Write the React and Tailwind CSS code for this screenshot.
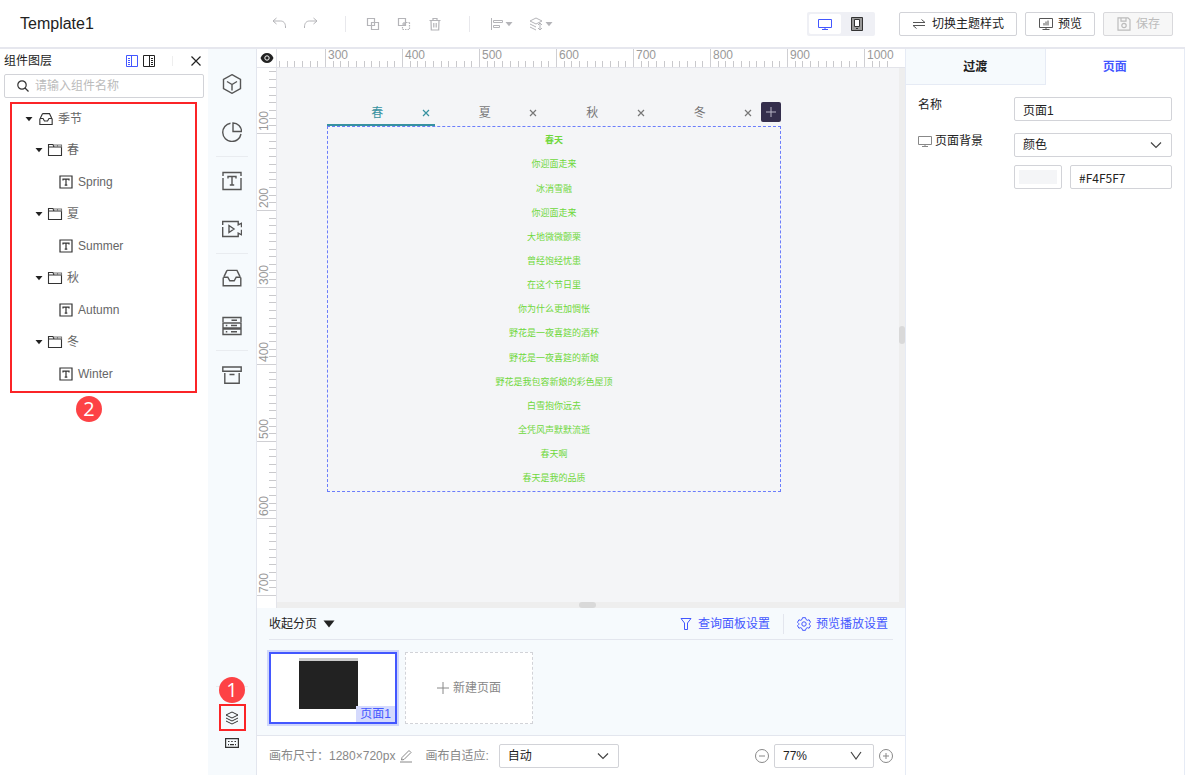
import React, { useState } from 'react';

const SCALE = 0.77;
const H_TICKS = Array.from({ length: 80 }, (_, i) => 240 + i * 10);
const V_TICKS = Array.from({ length: 69 }, (_, i) => 20 + i * 10);

const SEASONS = [
  { name: '春', child: 'Spring' },
  { name: '夏', child: 'Summer' },
  { name: '秋', child: 'Autumn' },
  { name: '冬', child: 'Winter' },
];

const POEM = [
  '春天',
  '你迎面走来',
  '冰消雪融',
  '你迎面走来',
  '大地微微颤栗',
  '曾经饱经忧患',
  '在这个节日里',
  '你为什么更加惆怅',
  '野花是一夜喜筵的酒杯',
  '野花是一夜喜筵的新娘',
  '野花是我包容新娘的彩色屋顶',
  '白雪抱你远去',
  '全凭风声默默流逝',
  '春天啊',
  '春天是我的品质',
];

function Icon({ size = 20, box = 20, className = '', children, width = 1.4 }) {
  return (
    <svg
      width={size}
      height={size}
      viewBox={`0 0 ${box} ${box}`}
      fill="none"
      stroke="currentColor"
      strokeWidth={width}
      className={`shrink-0 ${className}`}
      aria-hidden="true"
    >
      {children}
    </svg>
  );
}

const Caret = ({ className = '' }) => (
  <svg width="8" height="6" viewBox="0 0 8 6" fill="currentColor" className={`shrink-0 ${className}`} aria-hidden="true">
    <path d="M0.5 1h7L4 5.2z" />
  </svg>
);

const MonitorIcon = ({ size = 14, className }) => (
  <Icon size={size} box={14} className={className} width={1}>
    <path d="M0.5 2.5h13v8H0.5zM7 10.5v2M4 12.5h6" />
  </Icon>
);

const TextIcon = () => (
  <Icon size={14} box={14} width={1.2}>
    <path d="M1 1h12v12H1z" />
    <path d="M4 5.4V4.2h6v1.2M7 4.2v6M5.7 10.2h2.6" />
  </Icon>
);

const FolderIcon = () => (
  <Icon size={16} box={16} width={1.1}>
    <path d="M1.500 2.500h4.500l1 2.500h7.500v8.500h-13zM1.500 5H7" />
    <path d="M6.500 3h8v2.500M10.500 3v2" stroke="#777" />
  </Icon>
);

const InboxPath = () => (
  <>
    <path d="M5 2.4h10l3 6.2M5 2.4L2 8.6" />
    <path d="M1.2 9.4v8.4h17.6V9.4M1.2 9.2h4.6l2 3.6h4.4l2-3.6h4.6" />
  </>
);

const LayersPath = () => (
  <path d="M7 1l6 3-6 3-6-3zM1 7l6 3 6-3M1 10l6 3 6-3" />
);

function Ruler({ vertical }) {
  const start = vertical ? -12 : -183;
  const ticks = vertical ? V_TICKS : H_TICKS;
  return (
    <svg className={vertical ? 'h-full w-[19px] shrink-0' : 'h-[18px] w-0 flex-1'} aria-hidden="true">
      {ticks.map((value) => {
        const p = Math.round(value * SCALE + start);
        const major = value % 100 === 0;
        const from = major ? 0 : 12;
        return (
          <g key={value}>
            {vertical ? (
              <rect x={from} y={p} width={19 - from} height="1" fill={major ? '#cfcfd3' : '#c9c9cc'} />
            ) : (
              <rect x={p} y={from} width="1" height={18 - from} fill={major ? '#cfcfd3' : '#c9c9cc'} />
            )}
            {major && (
              <text
                x={vertical ? 0 : p + 3}
                y={vertical ? 0 : 10}
                transform={vertical ? `translate(11 ${p - 2}) rotate(-90)` : undefined}
                fill="#999"
                fontSize="12"
              >
                {value}
              </text>
            )}
          </g>
        );
      })}
    </svg>
  );
}

function Badge({ children, className }) {
  return (
    <span className={`absolute flex size-[26px] items-center justify-center rounded-full bg-[#fd4245] font-['Open_Sans',sans-serif] text-xl text-white ${className}`}>
      {children}
    </span>
  );
}

function ToolButton({ label, children }) {
  return (
    <button type="button" aria-label={label} className="flex h-6 items-center justify-center gap-[2px] text-[#b4b4b8]">
      {children}
    </button>
  );
}

function SelectBox({ label, value, options, onChange, className = '', wide }) {
  return (
    <div className={`relative ${className}`}>
      <select
        aria-label={label}
        value={value}
        onChange={(e) => onChange(e.target.value)}
        className="h-6 w-full appearance-none rounded-xs border border-[#d2d3d8] bg-white px-2 text-xs text-[#222]"
      >
        {options.map((o) => (
          <option key={o}>{o}</option>
        ))}
      </select>
      <Icon size={12} box={12} className={`pointer-events-none absolute top-[6px] text-[#444] ${wide ? 'right-3' : 'right-[10px]'}`} width={1.2}>
        <path d={wide ? 'M1 2l5 7 5-7' : 'M1 3.5l5 5 5-5'} />
      </Icon>
    </div>
  );
}

function Header() {
  return (
    <header className="flex h-[49px] shrink-0 items-center border-b-2 border-[#e6e7ee] bg-white pr-3 pl-5">
      <h1 className="w-[251px] text-base text-[#222]">Template1</h1>

      <div className="flex items-center">
        <div className="flex gap-4">
          <ToolButton label="撤销">
            <Icon size={16} box={16} width={1}>
              <path d="M5.500 2L2 5l3.500 3M2 5h7.500c3 0 5 2 5 6v1" />
            </Icon>
          </ToolButton>
          <ToolButton label="重做">
            <Icon size={16} box={16} width={1}>
              <path d="M10.500 2L14 5l-3.500 3M14 5H6.500c-3 0-5 2-5 6v1" />
            </Icon>
          </ToolButton>
        </div>
        <span className="mr-5 ml-[26px] h-4 w-px bg-[#e8e8ec]" />
        <div className="flex gap-[17px]">
          <ToolButton label="复制">
            <Icon size={14} box={14} width={1.2}>
              <path d="M1.500 1.500h7v7h-7zM5.500 5.500h7v7h-7z" />
            </Icon>
          </ToolButton>
          <ToolButton label="组合">
            <Icon size={14} box={14} width={1.2}>
              <path d="M1.500 1.500h7v7h-7zM7 5v4M5 7h4" />
              <path d="M12.500 5.500v7h-7v-3M9 5.500h3.500" strokeDasharray="1.500 1" />
            </Icon>
          </ToolButton>
          <ToolButton label="删除">
            <Icon size={14} box={14} width={1.2}>
              <path d="M1.500 3.500h11M5 3.500v-2h4v2M3 3.500l.3 9.500h7.400l.3-9.500M5.800 6v4.500M8.200 6v4.500" />
            </Icon>
          </ToolButton>
        </div>
        <span className="mr-[21px] ml-[27px] h-4 w-px bg-[#e8e8ec]" />
        <div className="flex gap-4">
          <ToolButton label="对齐">
            <Icon size={12} box={12} width={1}>
              <path d="M0.500 0v12M2.500 2.500h9v2h-9zM2.500 7.500h6v2h-6z" />
            </Icon>
            <Caret />
          </ToolButton>
          <ToolButton label="层级">
            <Icon size={14} box={14} width={1}>
              <path d="M7 1l6 3-6 3-6-3zM1 7l6 3M1 10l6 3M11 6v7M9 8l2-2 2 2M9 11l2 2 2-2" />
            </Icon>
            <Caret />
          </ToolButton>
        </div>
      </div>

      <div className="ml-auto flex items-center gap-2">
        <div className="mr-4 flex h-6 w-[68px] rounded-xs bg-[#eff0f5] p-[2px]">
          <button type="button" aria-label="桌面" className="flex flex-1 items-center justify-center rounded-xs bg-white text-[#4357ff]">
            <MonitorIcon size={14} />
          </button>
          <button type="button" aria-label="手机" className="flex flex-1 items-center justify-center text-[#333]">
            <Icon size={14} box={14} width={1}>
              <path d="M1.500 0.500h11v13h-11z" fill="#999" />
              <path d="M4.500 2.500h5v7h-5z" fill="#fff" />
              <path d="M6 11.500h2" />
            </Icon>
          </button>
        </div>
        <button type="button" className="flex h-6 items-center gap-[6px] rounded-xs border border-[#d2d3d8] bg-white px-3 text-xs text-[#222]">
          <Icon size={14} box={14} width={1} className="text-[#555]">
            <path d="M1 5.500h12L9.500 2.500M13 8.500H1l3.500 3" />
          </Icon>
          切换主题样式
        </button>
        <button type="button" className="flex h-6 items-center gap-1 rounded-xs border border-[#d2d3d8] bg-white px-3 text-xs text-[#222]">
          <Icon size={16} box={16} width={1} className="text-[#555]">
            <path d="M1.500 2.500h13v9h-13zM8 11.500v2M4.500 13.500h7M6 7v2.500M8 5.500v4M10 4.500v5" />
          </Icon>
          预览
        </button>
        <button type="button" disabled className="flex h-6 items-center gap-1 rounded-xs border border-[#d9d9dc] bg-[#f7f7f7] px-3 text-xs text-[#bcbcbc]">
          <Icon size={16} box={16} width={1.2}>
            <path d="M2 1.800h10l2 2v10.400H2zM5 1.800v3.400h5V1.800" />
            <circle cx="8" cy="9.500" r="2.200" />
          </Icon>
          保存
        </button>
      </div>
    </header>
  );
}

function LayerPanel() {
  return (
    <aside className="w-[208px] shrink-0 bg-white text-xs text-[#666]">
      <div className="flex h-6 items-center pr-[6px] pl-1 text-[#222]">
        <h2 className="mr-auto">组件图层</h2>
        <button type="button" aria-label="靠左" className="text-[#4357ff]">
          <Icon size={12} box={12} width={1}>
            <path d="M0.500 0.500h11v11H0.500zM5.500 0.500v11M2 3.500h2M2 5.500h2M2 7.500h2M2 9.500h2" />
          </Icon>
        </button>
        <button type="button" aria-label="靠右" className="ml-[5px]">
          <Icon size={12} box={12} width={1}>
            <path d="M0.500 0.500h11v11H0.500zM6.500 0.500v11M8 3.500h2M8 5.500h2M8 7.500h2M8 9.500h2" />
          </Icon>
        </button>
        <span className="mr-[17px] ml-[17px] h-[10px] w-px bg-[#eee]" />
        <button type="button" aria-label="关闭">
          <Icon size={12} box={12} width={1.2}>
            <path d="M1.500 1.500l9 9M10.500 1.500l-9 9" />
          </Icon>
        </button>
      </div>
      <label className="mx-1 mt-px flex h-6 items-center gap-[6px] rounded-xs border border-[#d2d3d8] px-3 text-[#333]">
        <Icon size={12} box={12} width={1.2}>
          <circle cx="5" cy="5" r="4.200" />
          <path d="M8 8l3.500 3.500" />
        </Icon>
        <input type="text" aria-label="请输入组件名称" placeholder="请输入组件名称" className="w-full outline-none placeholder:text-[#bbb]" />
      </label>

      <div className="relative mr-[11px] ml-[10px] mt-1 h-[291px] border-2 border-[#fb2427]">
        <ul>
          <li>
            <div className="flex h-[30px] items-center gap-[5px] pl-[13px]">
              <Caret className="text-[#222]" />
              <Icon size={14} box={20} className="ml-px text-[#333]" width={1.6}>
                <InboxPath />
              </Icon>
              <span>季节</span>
            </div>
            <ul>
              {SEASONS.map((s) => (
                <li key={s.name}>
                  <div className="flex h-8 items-center gap-1 pl-[23px]">
                    <Caret className="text-[#222]" />
                    <span className="text-[#333]"><FolderIcon /></span>
                    <span>{s.name}</span>
                  </div>
                  <div className="flex h-8 items-center gap-[5px] pl-[47px]">
                    <span className="text-[#333]"><TextIcon /></span>
                    <span>{s.child}</span>
                  </div>
                </li>
              ))}
            </ul>
          </li>
        </ul>
        <Badge className="top-[292px] left-16">2</Badge>
      </div>
    </aside>
  );
}

const STRIP = [
  [
    { label: '组件', icon: <path d="M10 0.700l8.500 4.700v9.200L10 19.300l-8.500-4.700V5.400zM5 7.500l5 3 5-3M10 10.500v6" /> },
    { label: '图表', icon: <path d="M8.500 1.200A9.200 9.200 0 1 0 19 12M11 1v8.500h8.500A8.500 8.500 0 0 0 11 1z" /> },
  ],
  [
    { label: '文本', icon: <path d="M1 5V1.500h18V5M1 7v11.500h18V7M6 7.500V5.500h8v2M10 5.500v8.500M7.800 14h4.400" /> },
    { label: '媒体', icon: <path d="M0.700 6V2.500h15.500v3.400l3.300-1.700v4M0.700 8v9.500h15.500v-3.400l3.300 1.700v-5M7 6.500v7l5-3.500z" /> },
  ],
  [
    { label: '容器', icon: <InboxPath /> },
    { label: '表单', icon: <path d="M1 6V1.500h18V6M1 7h18v5H1zM1 13h18v5.500H1zM9.500 4.200H15M3.800 9.500h1.500M9 9.500h6M3.800 15.700h1.500M9 15.700h6" /> },
  ],
  [{ label: '收藏', icon: <path d="M0.800 2h18.400v4.200H0.800zM2.800 8v10.200h14.400V8M7.500 9.500h5" /> }],
];

function IconStrip() {
  return (
    <nav className="flex w-[49px] shrink-0 flex-col items-center border-r border-[#e3e6ee] bg-[#f6fafd] pt-[11px] text-[#555]">
      {STRIP.map((group, i) => (
        <div key={i} className={`w-8 ${i > 0 ? 'border-t border-[#e9ecf0]' : ''}`}>
          {group.map((item) => (
            <button key={item.label} type="button" aria-label={item.label} className="flex h-12 w-full items-center justify-center">
              <Icon>{item.icon}</Icon>
            </button>
          ))}
        </div>
      ))}
      <div className="relative mt-auto flex w-8 flex-col items-center border-t border-[#e9ecf0] pt-[17px] pb-5 text-[#333]">
        <button type="button" aria-label="组件图层" className="flex size-[27px] items-center justify-center border-2 border-[#fb2427]">
          <Icon size={14} box={14} width={1}>
            <LayersPath />
          </Icon>
        </button>
        <button type="button" aria-label="快捷键" className="flex h-6 w-full items-center justify-center">
          <Icon size={14} box={14} width={1.2}>
            <path d="M0.600 2.600h12.800v8.800H0.600z" />
            <path d="M3 5.500h1.500M6.200 5.500h1.500M9.500 5.500H11M3 8.700h1M5 8.700h4M10 8.700h1" />
          </Icon>
        </button>
        <Badge className="top-[-10px] left-[3px]">1</Badge>
      </div>
    </nav>
  );
}

function TabWidget() {
  const [active, setActive] = useState('春');
  return (
    <div className="absolute top-[30px] left-[50px] w-[454px]">
      <div className="flex h-7 items-center">
        {SEASONS.map(({ name }) => (
          <div
            key={name}
            className={`flex h-full flex-1 items-center border-b-2 pt-1 ${
              name === active ? 'border-[#3792a0] text-[#3792a0]' : 'border-transparent text-[#777]'
            }`}
          >
            <button type="button" onClick={() => setActive(name)} className="flex-1 pl-[6px] text-center text-xs">
              {name}
            </button>
            <button type="button" aria-label={`删除${name}`} className="pr-[5px]">
              <Icon size={8} box={8} width={1.2}>
                <path d="M1 1l6 6M7 1L1 7" />
              </Icon>
            </button>
          </div>
        ))}
        <button type="button" aria-label="新增标签" className="ml-1 flex size-5 items-center justify-center rounded-xs bg-[#342e4c] text-[#b8b5c6]">
          <Icon size={10} box={10} width={1}>
            <path d="M5 0v10M0 5h10" />
          </Icon>
        </button>
      </div>
      <div className="flex h-[366px] flex-col border border-dashed border-[#6b7dfb] pt-[2px] text-center text-[9px] text-[#6fd83b]">
        {POEM.map((line, i) => (
          <p key={i} className={`flex flex-1 items-center justify-center ${i === 0 ? 'font-bold' : ''}`}>
            {line}
          </p>
        ))}
      </div>
    </div>
  );
}

function Workspace() {
  return (
    <section className="flex min-h-0 flex-1 flex-col">
      <div className="flex h-[19px] shrink-0 border-b border-[#e3e4ea] bg-white">
        <button type="button" aria-label="显示标尺" className="flex w-5 items-center justify-center border-r border-[#e3e4ea]">
          <svg width="14" height="12" viewBox="0 0 14 12" aria-hidden="true">
            <path d="M0.500 6C2 2.500 4 1 7 1s5 1.500 6.500 5C12 9.500 10 11 7 11S2 9.500 0.500 6z" fill="#222" />
            <circle cx="7" cy="6" r="2.200" fill="none" stroke="#fff" />
          </svg>
        </button>
        <Ruler />
      </div>
      <div className="flex min-h-0 flex-1">
        <div className="w-5 shrink-0 border-r border-[#e3e4ea] bg-white">
          <Ruler vertical />
        </div>
        <div className="flex min-w-0 flex-1 flex-col">
          <div className="flex min-h-0 flex-1">
            <div className="relative flex-1 overflow-hidden bg-[#f4f5f7]">
              <TabWidget />
            </div>
            <div className="flex w-[6px] flex-col justify-center bg-[#eee]">
              <div className="h-[18px] rounded-full bg-[#d9d9d9]" />
            </div>
          </div>
          <div className="flex h-[6px] shrink-0 justify-center bg-[#eee] pr-2">
            <div className="w-[17px] rounded-full bg-[#d9d9d9]" />
          </div>
        </div>
      </div>
    </section>
  );
}

function Pages() {
  return (
    <section className="h-32 shrink-0 border-b border-[#e3e6ee] bg-[#f6fafd] px-3 text-xs">
      <div className="flex h-8 items-center border-b border-[#e3e6ee]">
        <button type="button" className="mr-auto flex items-center gap-[6px] text-[#222]">
          收起分页
          <svg width="12" height="8" viewBox="0 0 12 8" aria-hidden="true">
            <path d="M0.500 0.500h11L6 7.500z" fill="#222" />
          </svg>
        </button>
        <button type="button" className="flex items-center gap-[6px] text-[#4357ff]">
          <Icon size={12} box={12} width={1}>
            <path d="M1 0.500h10L7.500 5v6.500h-3V5z" />
          </Icon>
          查询面板设置
        </button>
        <span className="mx-[13px] h-5 w-px bg-[#e3e6ee]" />
        <button type="button" className="mr-[5px] flex items-center gap-[5px] text-[#4357ff]">
          <Icon size={14} box={14} width={1}>
            <path d="M5.500 0.700h3l.5 1.800 1.300.8 1.800-.5 1.400 2.500L12.200 6.600v.8l1.300 1.300-1.400 2.500-1.800-.5-1.300.8-.5 1.800h-3L5 11.500l-1.300-.8-1.800.5L.5 8.700l1.300-1.300v-.8L.5 5.300l1.400-2.500 1.800.5L5 2.500z" />
            <circle cx="7" cy="7" r="2.200" />
          </Icon>
          预览播放设置
        </button>
      </div>
      <div className="flex gap-2 pt-3">
        <button type="button" className="relative flex h-[72px] w-32 justify-center border-2 border-[#4357ff] bg-white pr-[10px] ring-2 ring-[#cfd6fb]">
          <span className="mt-1 h-[51px] w-[59px] border-t-3 border-[#ccc] bg-[#222]" />
          <span className="absolute right-0 bottom-0 bg-[#d5dafd] px-1 leading-4 text-[#4357ff]">页面1</span>
        </button>
        <button type="button" className="flex h-[72px] w-32 items-center justify-center gap-1 border border-dashed border-[#d2d3d8] bg-white text-[#888]">
          <Icon size={12} box={12} width={1}>
            <path d="M6 0v12M0 6h12" />
          </Icon>
          新建页面
        </button>
      </div>
    </section>
  );
}

function Footer() {
  const [fit, setFit] = useState('自动');
  const [zoom, setZoom] = useState('77%');
  return (
    <footer className="flex h-[39px] shrink-0 items-center bg-white px-3 text-xs text-[#888]">
      <span>画布尺寸：1280×720px</span>
      <button type="button" aria-label="编辑尺寸" className="ml-1">
        <Icon size={14} box={14} width={1}>
          <path d="M3 8.500L10 1.500l2 2-7 7-2.500.5zM1 13h12" />
        </Icon>
      </button>
      <span className="ml-3">画布自适应:</span>
      <SelectBox label="画布自适应" value={fit} onChange={setFit} options={['自动', '宽度', '高度']} className="ml-[10px] w-[120px]" />
      <button type="button" aria-label="缩小" className="ml-auto">
        <Icon size={14} box={14} width={1}>
          <circle cx="7" cy="7" r="6.500" />
          <path d="M4 7h6" />
        </Icon>
      </button>
      <SelectBox label="缩放" value={zoom} onChange={setZoom} options={['50%', '77%', '100%']} className="mx-[5px] w-[100px]" wide />
      <button type="button" aria-label="放大">
        <Icon size={14} box={14} width={1}>
          <circle cx="7" cy="7" r="6.500" />
          <path d="M4 7h6M7 4v6" />
        </Icon>
      </button>
    </footer>
  );
}

function SettingsPanel() {
  const [name, setName] = useState('页面1');
  const [bgType, setBgType] = useState('颜色');
  const [color, setColor] = useState('#F4F5F7');
  return (
    <aside className="w-[280px] shrink-0 border-r border-l border-[#e6ebf5] bg-white text-xs text-[#222]">
      <div className="flex h-9 font-bold">
        <button type="button" className="flex-1 border-r border-b border-[#e6ebf5] bg-[#f6fafd]">过渡</button>
        <button type="button" className="flex-1 text-[#4357ff]">页面</button>
      </div>
      <div className="flex flex-col gap-3 pt-3 pr-3 pl-3">
        <div className="flex items-start">
          <label htmlFor="page-name" className="w-24 leading-4">名称</label>
          <input
            id="page-name"
            type="text"
            value={name}
            onChange={(e) => setName(e.target.value)}
            className="h-6 min-w-0 flex-1 rounded-xs border border-[#d2d3d8] px-2"
          />
        </div>
        <div className="flex items-start">
          <span className="flex w-24 items-center gap-[3px] leading-4">
            <MonitorIcon className="text-[#888]" />
            页面背景
          </span>
          <div className="min-w-0 flex-1">
            <SelectBox label="页面背景" value={bgType} onChange={setBgType} options={['颜色', '图片']} />
            <div className="mt-2 flex gap-2">
              <button type="button" aria-label="选择颜色" className="h-6 w-12 shrink-0 rounded-xs border border-[#d2d3d8] p-1">
                <span className="block h-full bg-[#f4f5f7]" />
              </button>
              <input
                type="text"
                aria-label="颜色值"
                value={color}
                onChange={(e) => setColor(e.target.value)}
                className="h-6 w-full min-w-0 rounded-xs border border-[#d2d3d8] px-2 font-['Noto_Sans_CJK_SC',sans-serif]"
              />
            </div>
          </div>
        </div>
      </div>
    </aside>
  );
}

export default function App() {
  return (
    <div className="flex h-screen flex-col bg-white font-['Liberation_Sans','Noto_Sans_CJK_SC',sans-serif]">
      <Header />
      <div className="flex min-h-0 flex-1">
        <LayerPanel />
        <IconStrip />
        <main className="flex min-w-0 flex-1 flex-col">
          <Workspace />
          <Pages />
          <Footer />
        </main>
        <SettingsPanel />
      </div>
    </div>
  );
}
